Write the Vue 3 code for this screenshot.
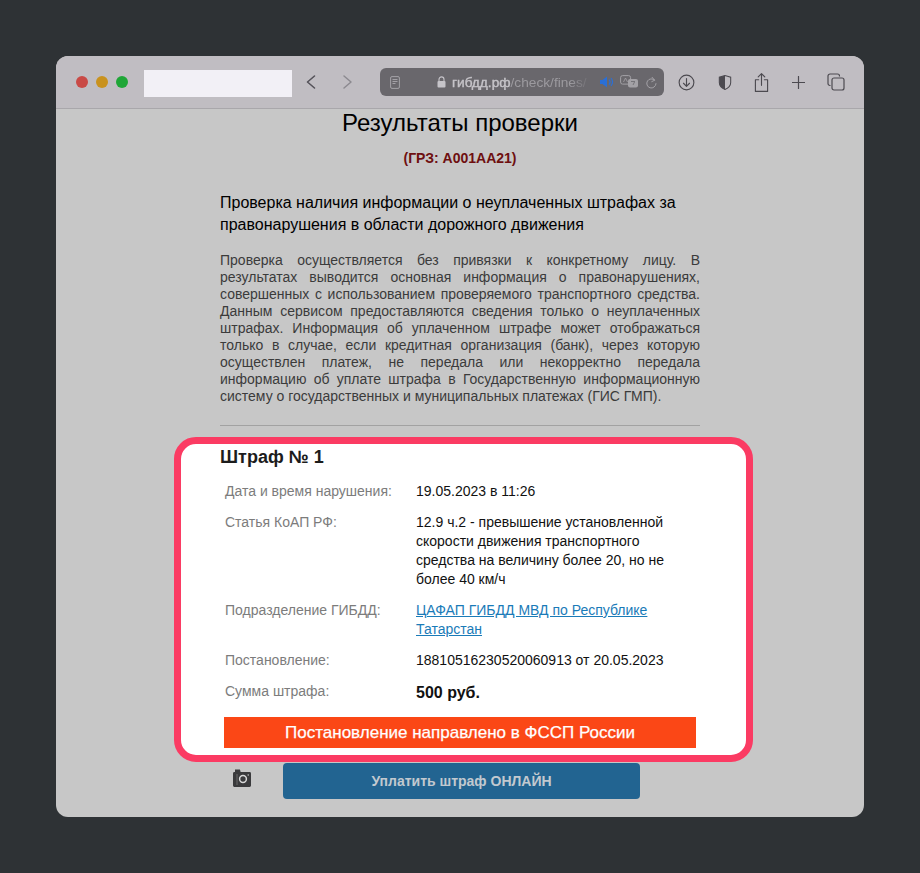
<script setup>
const notice = [
  'Проверка осуществляется без привязки к конкретному лицу. В результатах выводится основная информация о правонарушениях, совершенных с использованием проверяемого транспортного средства. Данным сервисом предоставляются сведения только о неуплаченных штрафах. Информация об уплаченном штрафе может отображаться только в случае, если кредитная организация (банк), через которую осуществлен платеж, не передала или некорректно передала информацию об уплате штрафа в Государственную информационную систему о государственных и муниципальных платежах (ГИС ГМП).',
];
</script>

<template>
  <div class="screen">
    <div class="window">
      <header class="toolbar">
        <div class="lights">
          <span class="light red"></span>
          <span class="light amber"></span>
          <span class="light green"></span>
        </div>
        <div class="blank-tab"></div>
        <svg class="nav back" width="14" height="18" viewBox="0 0 14 18">
          <path d="M10.500 3 3.500 9l7 6" fill="none" stroke="#55535a" stroke-width="1.600" stroke-linecap="round" stroke-linejoin="round" />
        </svg>
        <svg class="nav forward" width="14" height="18" viewBox="0 0 14 18">
          <path d="M4 3l7 6-7 6" fill="none" stroke="#8c8a90" stroke-width="1.500" stroke-linecap="round" stroke-linejoin="round" />
        </svg>
        <div class="address">
          <svg class="reader" width="10" height="13" viewBox="0 0 10 13">
            <rect x=".6" y=".6" width="8.800" height="11.800" rx="1.400" fill="none" stroke="#a3a1a6" stroke-width="1" />
            <path d="M2.500 3.500h5M2.500 5.500h5M2.500 7.500h3" stroke="#a3a1a6" stroke-width="1" />
          </svg>
          <svg class="lock" width="9" height="12" viewBox="0 0 9 12">
            <path d="M2 5V3.400a2.500 2.500 0 0 1 5 0V5" fill="none" stroke="#c6c4c9" stroke-width="1.100" />
            <rect x=".5" y="5" width="8" height="6.500" rx="1" fill="#c6c4c9" />
          </svg>
          <span class="url"><span class="host">гибдд.рф</span><span class="path">/check/fines/</span></span>
          <svg class="speaker" width="14" height="12" viewBox="0 0 14 12">
            <path d="M0 4h2.500L7 .5v11L2.500 8H0z" fill="#2a6fd6" />
            <path d="M9 3.500a4 4 0 0 1 0 5M11 2a6.500 6.500 0 0 1 0 8" fill="none" stroke="#2a6fd6" stroke-width="1.200" />
          </svg>
          <svg class="translate" width="19" height="15" viewBox="0 0 19 15">
            <rect x=".6" y=".6" width="10" height="8.500" rx="2" fill="none" stroke="#a3a1a6" />
            <rect x="8" y="4" width="10" height="8.500" rx="2" fill="#a3a1a6" />
            <path d="M11 6.500h4M13 10l1.500-3" stroke="#6a686d" stroke-width=".8" />
            <path d="M3.500 7l2-4 2 4" fill="none" stroke="#a3a1a6" stroke-width=".8" />
          </svg>
          <svg class="reload" width="11" height="13" viewBox="0 0 11 13">
            <path d="M8.700 4.200A4.600 4.600 0 1 0 10 7.600" fill="none" stroke="#a3a1a6" stroke-width="1" stroke-linecap="round" />
            <path d="M5.800 1l2.900 3.200L5.400 5.800" fill="none" stroke="#a3a1a6" stroke-width="1" />
          </svg>
        </div>
        <div class="actions">
          <svg width="17" height="17" viewBox="0 0 18 18">
            <circle cx="9" cy="9" r="7.800" fill="none" stroke="#4c4a50" stroke-width="1.200" />
            <path d="M9 4.800v8M5.800 9.800 9 13l3.200-3.200" fill="none" stroke="#4c4a50" stroke-width="1.200" stroke-linecap="round" stroke-linejoin="round" />
          </svg>
          <svg width="14" height="17" viewBox="0 0 16 18">
            <path d="M8 1 1.500 3v6c0 4 3 6.500 6.500 8 3.500-1.500 6.500-4 6.500-8V3z" fill="none" stroke="#4c4a50" stroke-width="1.200" />
            <path d="M8 1 1.500 3v6c0 4 3 6.500 6.500 8z" fill="#4c4a50" />
          </svg>
          <svg width="15" height="21" viewBox="0 0 16 22">
            <path d="M5 8H1.500v12.500h13V8H11M8 14V1.500M4.500 5 8 1.500 11.500 5" fill="none" stroke="#4c4a50" stroke-width="1.200" stroke-linecap="round" stroke-linejoin="round" />
          </svg>
          <svg width="13" height="13" viewBox="0 0 14 14">
            <path d="M7 .5v13M.5 7h13" stroke="#4c4a50" stroke-width="1.300" stroke-linecap="round" />
          </svg>
          <svg width="18" height="18" viewBox="0 0 18 18">
            <path d="M3.500 12.500H3a2 2 0 0 1-2-2V3a2 2 0 0 1 2-2h7.500a2 2 0 0 1 2 2v.5" fill="none" stroke="#4c4a50" stroke-width="1.200" />
            <rect x="5" y="5" width="12" height="12" rx="2" fill="none" stroke="#4c4a50" stroke-width="1.200" />
          </svg>
        </div>
      </header>

      <main class="content">
        <h1 class="title">Результаты проверки</h1>
        <div class="plate">(ГРЗ: А001АА21)</div>
        <h2 class="subtitle">Проверка наличия информации о неуплаченных штрафах за правонарушения в области дорожного движения</h2>
        <p v-for="text in notice" :key="text" class="notice">{{ text }}</p>
        <div class="divider"></div>

        <section class="fine">
          <h3 class="fine-title">Штраф № 1</h3>
          <dl class="fine-rows">
            <dt>Дата и время нарушения:</dt>
            <dd>19.05.2023 в 11:26</dd>
            <dt>Статья КоАП РФ:</dt>
            <dd>12.9 ч.2 - превышение установленной скорости движения транспортного средства на величину более 20, но не более 40 км/ч</dd>
            <dt>Подразделение ГИБДД:</dt>
            <dd><a href="#">ЦАФАП ГИБДД МВД по Республике Татарстан</a></dd>
            <dt>Постановление:</dt>
            <dd>18810516230520060913 от 20.05.2023</dd>
            <dt>Сумма штрафа:</dt>
            <dd class="sum">500 руб.</dd>
          </dl>
          <div class="status">Постановление направлено в ФССП России</div>
        </section>

        <div class="pay-row">
          <svg class="camera" width="18" height="18" viewBox="0 0 18 18">
            <path d="M2 .5h5l.6 2.500h9a1.400 1.400 0 0 1 1.400 1.400v12.200a1.400 1.400 0 0 1-1.400 1.400H1.400A1.400 1.400 0 0 1 0 16.600V4.400A1.400 1.400 0 0 1 1.400 3H2z" fill="#3a3a3c" />
            <path d="M4 5v11" stroke="#6a6a6a" stroke-width="1" />
            <circle cx="10" cy="10" r="3.400" fill="none" stroke="#d8d8d8" stroke-width="1.500" />
            <circle cx="15.200" cy="6" r=".7" fill="#d8d8d8" />
          </svg>
          <button class="pay" type="button">Уплатить штраф ОНЛАЙН</button>
        </div>
      </main>
    </div>
  </div>
</template>

<style scoped>
.screen {
  width: 920px;
  height: 873px;
  box-sizing: border-box;
  padding: 56px;
  background: #2e3235;
  font-family: "Liberation Sans", Arial, sans-serif;
  overflow: hidden;
}

.window {
  height: 761px;
  border-radius: 12px;
  overflow: hidden;
  background: #c7c7c7;
  display: flex;
  flex-direction: column;
}

.toolbar {
  height: 52px;
  flex: none;
  display: flex;
  align-items: center;
  background: #c0bdc2;
  border-bottom: 1px solid #a9a7ab;
}

.lights {
  display: flex;
  gap: 8px;
  margin-left: 20px;
}

.light {
  width: 12px;
  height: 12px;
  border-radius: 50%;
}

.red { background: #c94a46; }
.amber { background: #c9921e; }
.green { background: #1fa637; }

.blank-tab {
  width: 148px;
  height: 27px;
  margin-left: 16px;
  align-self: flex-start;
  margin-top: 14px;
  background: #f2f0f6;
}

.nav { flex: none; }
.back { margin-left: 12px; }
.forward { margin-left: 22px; }

.address {
  width: 284px;
  height: 28px;
  margin-left: 26px;
  box-sizing: border-box;
  border-radius: 6px;
  background: #69676c;
  display: flex;
  align-items: center;
  padding-left: 10px;
  flex: none;
}

.lock { margin-left: 37px; flex: none; }

.url {
  margin-left: 6px;
  width: 144px;
  flex: none;
  overflow: hidden;
  white-space: nowrap;
  font-size: 13.7px;
  color: #c6c4c9;
  -webkit-mask-image: linear-gradient(to right, #000 82%, transparent 97%);
  mask-image: linear-gradient(to right, #000 82%, transparent 97%);
}

.host { -webkit-text-stroke: 0.4px #c6c4c9; }
.path { color: #9c9a9f; }

.speaker { margin-left: 4px; flex: none; }
.translate { margin-left: 6px; flex: none; }
.reload { margin-left: 7px; flex: none; }

.actions {
  display: flex;
  align-items: center;
  margin-left: 14px;
  gap: 22.6px;
}

.content {
  flex: 1;
  width: 480px;
  margin-left: 164px;
  display: flex;
  flex-direction: column;
}

.title {
  margin: 0;
  height: 30px;
  line-height: 28px;
  font-size: 24px;
  font-weight: 400;
  color: #000;
  text-align: center;
}

.plate {
  margin-top: 11px;
  line-height: 16px;
  font-size: 14px;
  font-weight: 700;
  color: #6e0f10;
  text-align: center;
}

.subtitle {
  margin: 26px 0 0;
  font-size: 16px;
  line-height: 22px;
  font-weight: 400;
  color: #000;
}

.notice {
  margin: 16px 0 0;
  font-size: 14px;
  line-height: 17px;
  color: #3b3b3b;
  text-align: justify;
}

.divider {
  margin-top: 20px;
  height: 1px;
  background: #a2a2a2;
}

.fine {
  margin: 11px -53px 0 -46px;
  padding: 3px 45px 7px 39px;
  height: 325px;
  flex: none;
  box-sizing: border-box;
  border: 7px solid #fb3b63;
  border-radius: 22px;
  background: #fff;
}

.fine-title {
  margin: 0;
  font-size: 18px;
  line-height: 20px;
  font-weight: 700;
  color: #1c1c1c;
}

.fine-rows {
  margin: 15px 0 0 5px;
  display: grid;
  grid-template-columns: 191px 1fr;
  row-gap: 12px;
  font-size: 14px;
  line-height: 19px;
  width: 446px;
}

.fine-rows dt {
  color: #7c7c7c;
}

.fine-rows dd {
  margin: 0;
  color: #111;
}

.fine-rows a {
  color: #1a7bb8;
}

.fine-rows .sum {
  font-size: 16px;
  line-height: 21px;
  font-weight: 700;
}

.status {
  margin: 14px 0 0 4px;
  width: 472px;
  height: 31px;
  line-height: 31px;
  background: #fb4716;
  color: #fff;
  font-size: 17px;
  -webkit-text-stroke: 0.25px #fff;
  text-align: center;
}

.pay-row {
  display: flex;
  align-items: flex-start;
  margin-top: 1px;
}

.camera {
  margin: 6px 0 0 13px;
  flex: none;
}

.pay {
  margin-left: 32px;
  width: 357px;
  height: 36px;
  border: 0;
  border-radius: 4px;
  background: #226491;
  color: #c2c9cf;
  font: 700 14px "Liberation Sans", Arial, sans-serif;
}
</style>
